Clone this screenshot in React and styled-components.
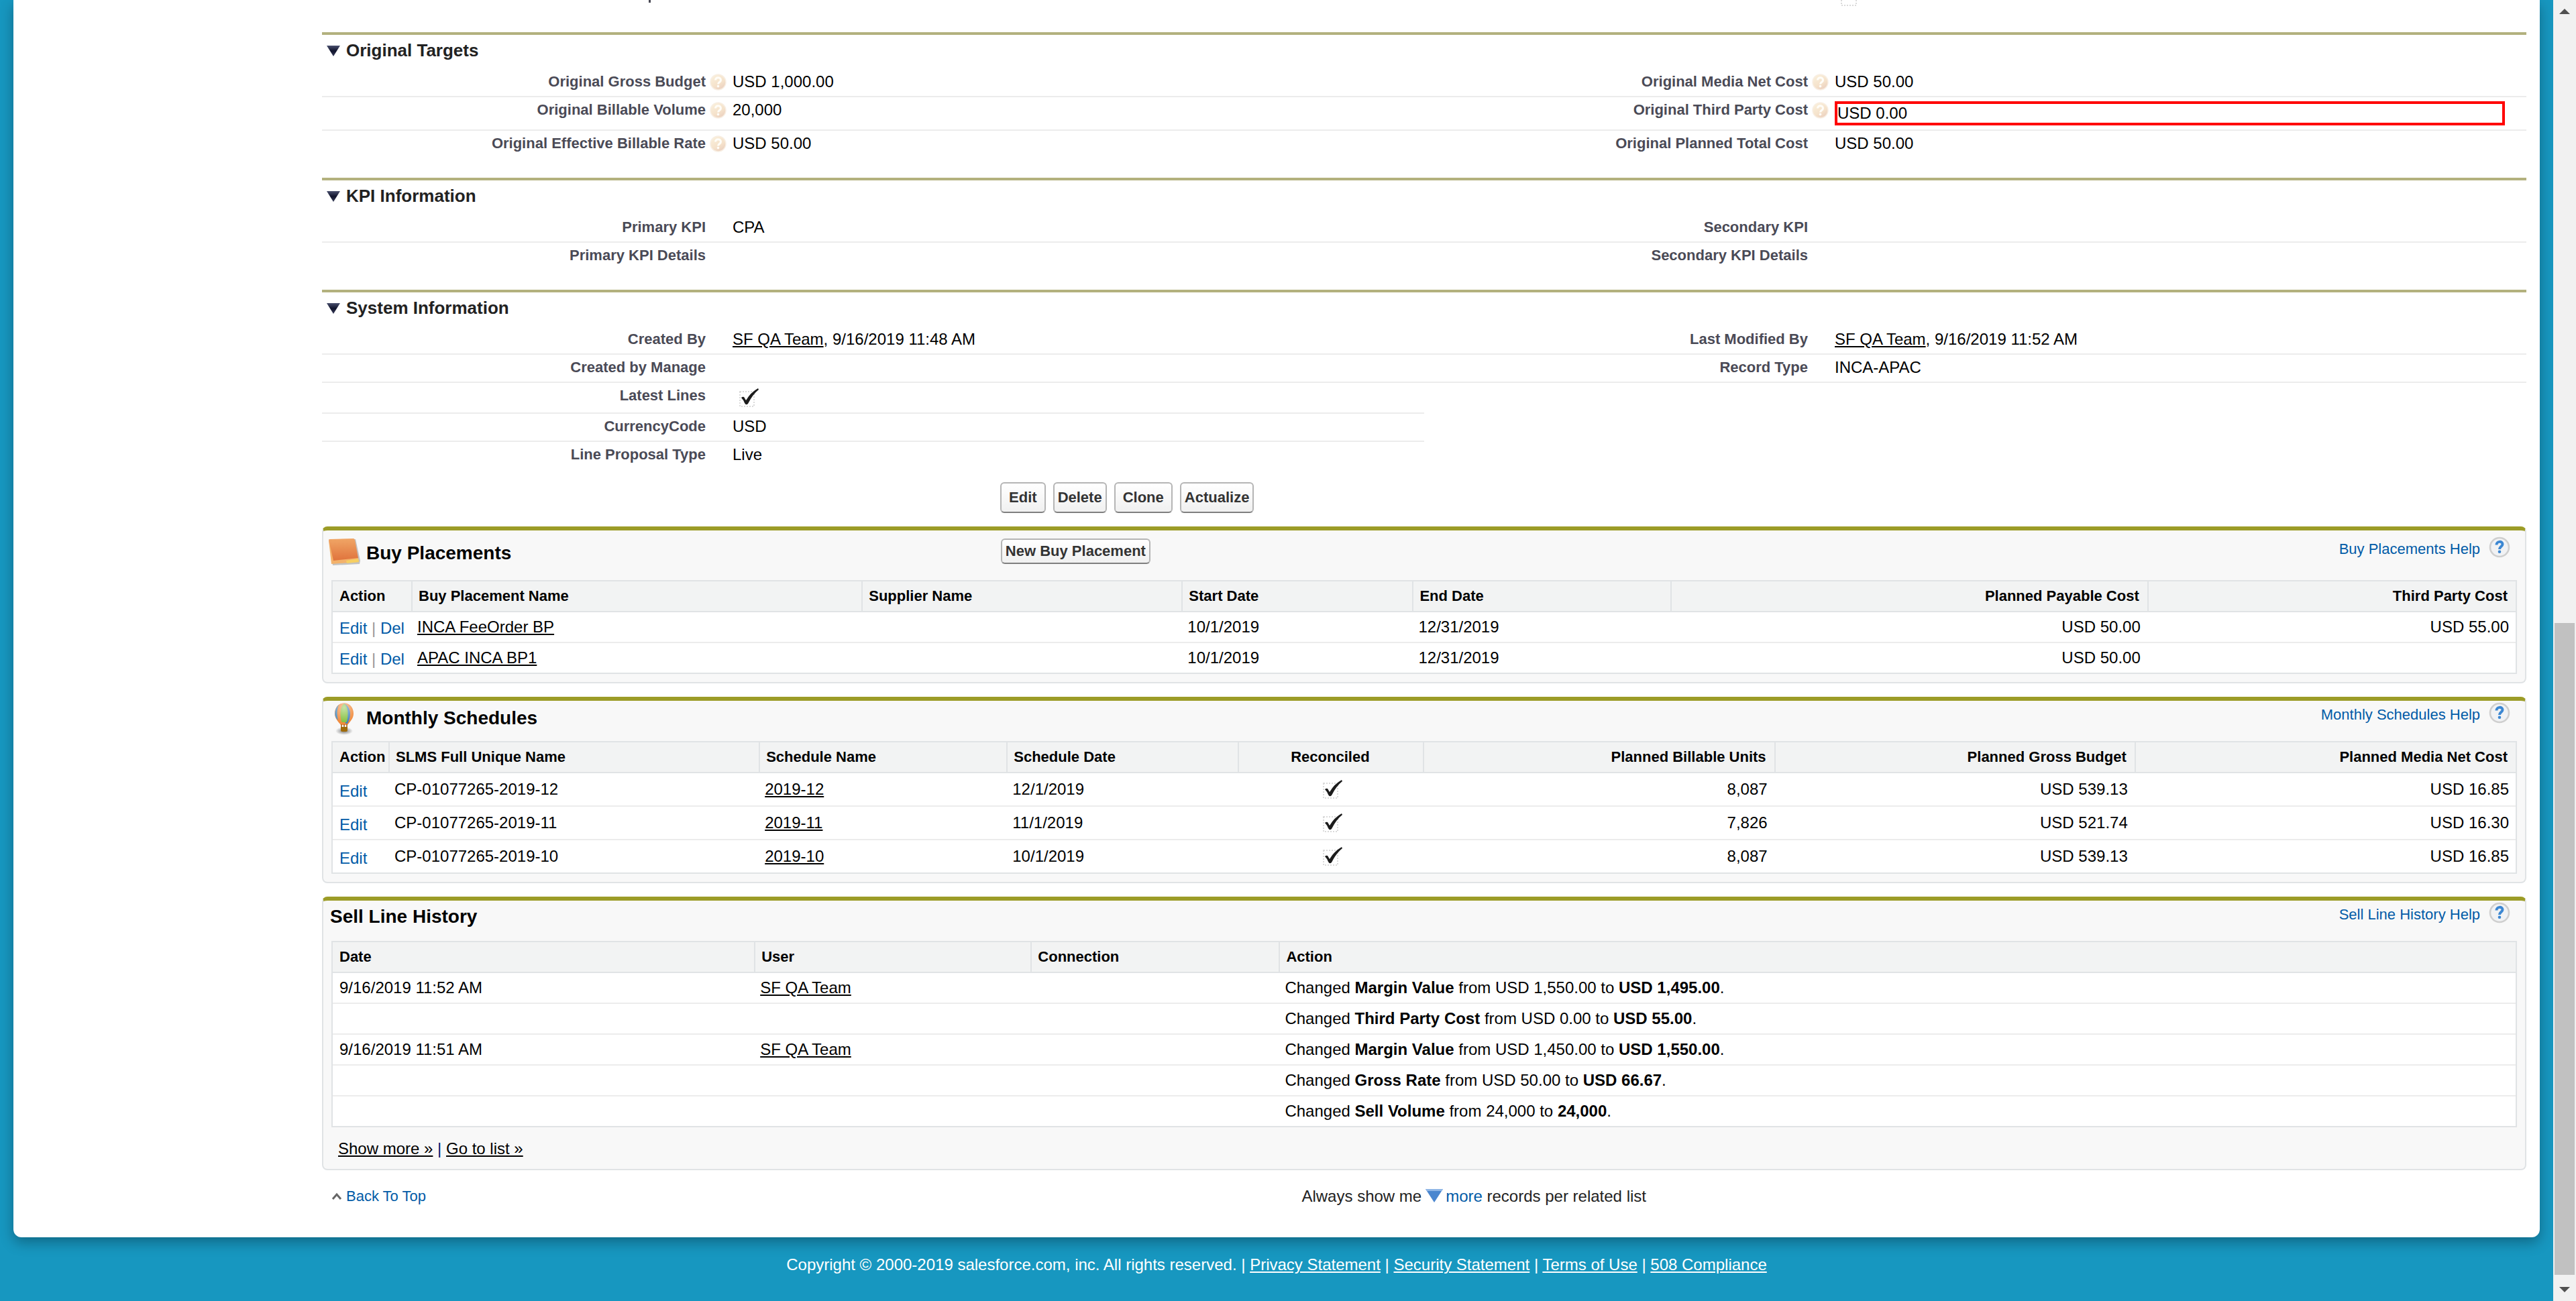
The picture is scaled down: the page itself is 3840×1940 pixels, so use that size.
import React from "react";
import styled, { createGlobalStyle, css } from "styled-components";

const GlobalStyle = createGlobalStyle`
  *, *::before, *::after { box-sizing: border-box; }
  body {
    margin: 0;
    background: #1797c0;
    color: #000;
    font-family: "Liberation Sans", Arial, Helvetica, sans-serif;
    font-size: 24px;
    line-height: 26px;
  }
`;

/* ---------- page frame ---------- */

const Shell = styled.div`
  display: grid;
  grid-template-columns: minmax(0, 1fr) 34px;
  min-height: 100vh;
`;

const Viewport = styled.div`
  display: flex;
  flex-direction: column;
  padding: 0 20px;
`;

const Sheet = styled.main`
  background: #fff;
  border-radius: 0 0 12px 12px;
  box-shadow: 0 8px 20px rgba(0, 0, 0, 0.3);
  padding: 0 20px 46px 460px;
`;

const PageFooter = styled.footer`
  padding: 27px 0 16px;
  color: #fff;
  text-align: center;
  line-height: 28px;
`;

const FooterLink = styled.a`
  color: #fff;
  text-decoration: underline;
`;

const ScrollRail = styled.div`
  display: flex;
  flex-direction: column;
  background: #f1f1f1;
`;

const ScrollArrow = styled.button`
  display: flex;
  align-items: center;
  justify-content: center;
  flex: 0 0 34px;
  padding: 0;
  border: 0;
  background: #f1f1f1;
`;

const ScrollGap = styled.div`
  flex: ${(p) => p.$share} 1 0;
`;

const ScrollThumb = styled.div`
  flex: 972 1 0;
  margin: 0 2px;
  background: #c1c1c1;
`;

/* ---------- detail sections ---------- */

const ClippedRow = styled.div`
  display: grid;
  grid-template-columns: 612fr 1031fr 612fr 1031fr;
  align-items: start;
  height: 48px;
  overflow: hidden;
`;

const Descender = styled.span`
  justify-self: end;
  width: 3px;
  height: 4px;
  margin-right: 122px;
  background: #4a4a56;
`;

const BoxEdge = styled.svg`
  display: block;
  grid-column: 4;
`;

const Section = styled.section`
  border-top: 4px solid #b3b17e;
  padding-bottom: ${(p) => (p.$last ? 20 : 30)}px;
`;

const SectionTitle = styled.h3`
  display: flex;
  align-items: center;
  gap: 9px;
  margin: 0;
  padding: 8px 0 13px 7px;
  color: #222;
  font-size: 26px;
  line-height: 30px;
`;

const FieldRow = styled.div`
  display: grid;
  grid-template-columns: 1fr 1fr;
`;

const fieldLine = css`
  border-bottom: 2px solid #ececec;
`;

const FieldPair = styled.dl`
  display: grid;
  grid-template-columns: 612fr 1031fr;
  align-items: start;
  min-height: ${(p) => (p.$line ? 42 : 40)}px;
  margin: 0;
  padding: 6px 0;
  ${(p) => p.$line && fieldLine}
`;

const FieldLabel = styled.dt`
  display: flex;
  justify-content: flex-end;
  color: #4a4a56;
  font-size: 22px;
  font-weight: bold;
`;

const HelpSlot = styled.span`
  flex: 0 0 40px;
  height: 26px;
  padding-left: 6px;
`;

const FieldValue = styled.dd`
  margin: 0 32px 0 0;
  ${(p) =>
    p.$flagged &&
    css`
      border: 4px solid #f00;
      line-height: 28px;
    `}
`;

const RecordLink = styled.a`
  color: #000;
  text-decoration: underline;
`;

const BlueLink = styled.a`
  color: #015ba7;
  font-size: ${(p) => (p.$small ? 22 : 24)}px;
  text-decoration: none;
`;

const Tick = styled.span`
  position: relative;
  display: inline-block;
  width: 42px;
  height: 32px;
  vertical-align: top;
`;

const TickInput = styled.input`
  position: absolute;
  inset: 0;
  width: 100%;
  height: 100%;
  margin: 0;
  appearance: none;
`;

const Glyph = styled.svg`
  display: block;
  flex: none;
`;

const InlineGlyph = styled.svg`
  margin: 0 4px 0 6px;
  vertical-align: -1px;
`;

/* ---------- buttons ---------- */

const ButtonRow = styled.div`
  display: grid;
  grid-template-columns: 4fr 9fr;
  padding-bottom: 20px;
`;

const Buttons = styled.div`
  grid-column: 2;
  display: flex;
  gap: 11px;
`;

const Button = styled.button`
  height: ${(p) => (p.$short ? 38 : 46)}px;
  padding: 0 ${(p) => (p.$roomy ? 11 : 5)}px;
  border: 2px solid #b5b5b5;
  border-bottom-color: #7f7f7f;
  border-radius: 6px;
  background: linear-gradient(#fff, #f0f0f0);
  color: #333;
  font-family: inherit;
  font-size: 22px;
  font-weight: bold;
  line-height: 26px;
  white-space: nowrap;
`;

/* ---------- related lists ---------- */

const Panel = styled.section`
  margin-bottom: 20px;
  border: 2px solid #e0e3e5;
  border-top: 6px solid #9c9c27;
  border-radius: 8px;
  background: #f8f8f8;
  padding-bottom: ${(p) => (p.$linked ? 0 : 12)}px;
`;

const PanelHead = styled.header`
  display: grid;
  grid-template-columns: 4fr 9fr;
  align-items: start;
  height: ${(p) => (p.$tall ? 74 : 60)}px;
`;

const PanelName = styled.div`
  display: flex;
  padding-left: ${(p) => (p.$plain ? 10 : 0)}px;
`;

const PanelTitle = styled.h3`
  margin: 0;
  padding-top: ${(p) => p.$drop}px;
  font-size: 28px;
  line-height: 32px;
`;

const PanelTools = styled.div`
  display: flex;
  align-items: flex-start;
  padding-top: ${(p) => (p.$tall ? 12 : 2)}px;
`;

const PanelHelp = styled.a`
  display: flex;
  align-items: flex-end;
  gap: 13px;
  margin: ${(p) => (p.$tall ? "-3px" : "0")} 22px 0 auto;
  color: #015ba7;
  font-size: 22px;
  text-decoration: none;
`;

const TableFrame = styled.div`
  margin: 0 12px;
  border: 2px solid #e0e3e5;
  background: #fff;
`;

const DataTable = styled.table`
  width: 100%;
  table-layout: fixed;
  border-collapse: separate;
  border-spacing: 0;
`;

const HeadCell = styled.th`
  padding: 9px 12px 9px 9px;
  border-bottom: 2px solid #e0e3e5;
  border-left: 2px solid #e0e3e5;
  background: #f2f3f3;
  font-size: 22px;
  line-height: 26px;
  text-align: ${(p) => p.$align || "left"};
  white-space: nowrap;

  &:first-child {
    border-left: 0;
    padding-left: 10px;
    padding-right: 0;
  }
`;

const Cell = styled.td`
  height: ${(p) => (p.$tall ? 50 : 46)}px;
  padding: ${(p) => (p.$action ? 11 : p.$tall ? 8 : 9)}px 10px 0 9px;
  border-bottom: 2px solid #ececec;
  line-height: ${(p) => (p.$tall ? 32 : 26)}px;
  text-align: ${(p) => p.$align || "left"};
  vertical-align: top;
  white-space: nowrap;

  tr:last-child > & {
    height: ${(p) => (p.$tall ? 48 : 44)}px;
    border-bottom: 0;
  }

  &:first-child {
    padding-left: 10px;
    padding-right: 0;
  }
`;

const Bar = styled.span`
  color: #9a9a9a;
`;

const ListLinks = styled.div`
  padding: 18px 0 16px 22px;
  line-height: 28px;
`;

const NavyBar = styled.span`
  color: #00186f;
`;

const Bottom = styled.div`
  display: grid;
  grid-template-columns: 4fr 5fr;
  padding-top: 4px;
`;

const BackToTop = styled.div`
  display: flex;
  align-items: center;
  gap: 6px;
  padding-left: 14px;
`;

const MoreRecords = styled.div`
  color: #222;
  line-height: 30px;
`;

/* ---------- drawings ---------- */

const Twisty = () => (
  <Glyph width="20" height="18" viewBox="0 0 20 18" aria-hidden="true">
    <defs>
      <linearGradient id="twisty" x1="0" y1="0" x2="0" y2="1">
        <stop offset="0" stopColor="#4a506e" />
        <stop offset="0.5" stopColor="#10132c" />
        <stop offset="1" stopColor="#3b3f5c" />
      </linearGradient>
    </defs>
    <path d="M0 2h20L10 18z" fill="url(#twisty)" />
  </Glyph>
);

const FieldHelp = () => (
  <Glyph width="25" height="26" viewBox="0 0 25 26" aria-hidden="true">
    <defs>
      <linearGradient id="fieldHelp" x1="0.2" y1="0" x2="0.8" y2="1">
        <stop offset="0" stopColor="#faf0dc" />
        <stop offset="0.6" stopColor="#f5e2cb" />
        <stop offset="1" stopColor="#e9cdbd" />
      </linearGradient>
    </defs>
    <circle cx="12.5" cy="13.5" r="11.5" fill="url(#fieldHelp)" stroke="#f8efe4" strokeWidth="1.5" />
    <path d="M8.500 10.500c0-5 8-5 8 0 0 3-4 3-4 6" fill="none" stroke="#fffdf8" strokeWidth="3" />
    <circle cx="12.5" cy="19.6" r="1.8" fill="#fffdf8" />
  </Glyph>
);

const PanelHelpIcon = () => (
  <Glyph width="32" height="32" viewBox="0 0 32 32" aria-hidden="true">
    <circle cx="16" cy="16" r="14" fill="#f1f2f4" stroke="#cfcfcf" strokeWidth="2.6" />
    <path d="M11.5 12.500C11.500 6.500 20.500 6.500 20.500 11.500 20.500 15 16 15 16 19" fill="none" stroke="#3c87d2" strokeWidth="4" />
    <circle cx="16" cy="22.800" r="2.300" fill="#3c87d2" />
  </Glyph>
);

const BookIcon = () => (
  <Glyph width="64" height="60" viewBox="0 0 64 60" aria-hidden="true">
    <defs>
      <linearGradient id="book" x1="0" y1="0" x2="0" y2="1">
        <stop offset="0" stopColor="#f0a666" />
        <stop offset="1" stopColor="#e0733c" />
      </linearGradient>
    </defs>
    <path d="M10 16 48 13 55 45 54 50 14 52z" fill="#8b8b8b" opacity="0.5" />
    <path d="M8 15 12 50 53 47 52 41z" fill="#f3b26b" />
    <path d="M34 45 52 42 53 47 35 49z" fill="#f6cf62" />
    <path d="M8 14Q8 13 10 13L45 12Q46 12 47 14L52 41 15 45Z" fill="url(#book)" />
  </Glyph>
);

const BalloonIcon = () => (
  <Glyph width="64" height="60" viewBox="0 0 64 60" aria-hidden="true">
    <defs>
      <radialGradient id="balloonGlow" cx="0.5" cy="0.2" r="0.7">
        <stop offset="0" stopColor="#fff" stopOpacity="0.55" />
        <stop offset="1" stopColor="#fff" stopOpacity="0" />
      </radialGradient>
      <radialGradient id="balloonShade">
        <stop offset="0" stopColor="#444" stopOpacity="0.7" />
        <stop offset="1" stopColor="#444" stopOpacity="0" />
      </radialGradient>
    </defs>
    <ellipse cx="31" cy="45" rx="13" ry="6" fill="url(#balloonShade)" />
    <path d="M31 3.500C22 3.500 17 11 17 19c0 7 5 12 9 17h10c4-5 9-10 9-17 0-8-5-15.500-14-15.500z" fill="#f08a3c" />
    <path d="M23 6C18 10 16.500 18 18 23c.5 2 2 4 4 6-2-8-2-16 1-23z" fill="#4a90c8" />
    <path d="M31 4c6 3 9 9 9 16 0 5-2 10-4 14h-3z" fill="#3f7fc0" />
    <path d="M31 4c-4 3-5.500 9-5.500 15 0 5 .5 9 2 13h7c1.500-4 2-8 2-13 0-6-1.500-12-5.500-15z" fill="#83c03c" />
    <path d="M31 3.500C22 3.500 17 11 17 19c0 7 5 12 9 17h10c4-5 9-10 9-17 0-8-5-15.500-14-15.500z" fill="url(#balloonGlow)" />
    <path d="M27 35v5M31 35v5M35 35v5" stroke="#a8641c" strokeWidth="1.6" />
    <path d="M26 39h10v5q0 2-2 2h-6q-2 0-2-2z" fill="#a06a08" />
  </Glyph>
);

const TickBox = ({ label }) => (
  <Tick>
    <TickInput type="checkbox" aria-label={label} checked readOnly />
    <Glyph width="42" height="32" viewBox="0 0 42 32" aria-hidden="true">
      <rect x="11" y="7" width="21" height="22" fill="none" stroke="#dadada" strokeWidth="2" strokeDasharray="2 2" />
      <path d="M13 16Q15 14 17 15L20 20Q27 8 38 2L39 4Q30 11 23 25 20 28 18 24 16 19 13 16z" fill="#1c1c1c" />
    </Glyph>
  </Tick>
);

/* ---------- data ---------- */

const stamp = (time) => (
  <>
    <RecordLink href="#user">SF QA Team</RecordLink>, {time}
  </>
);

const sections = [
  {
    title: "Original Targets",
    rows: [
      [
        { label: "Original Gross Budget", value: "USD 1,000.00", help: true },
        { label: "Original Media Net Cost", value: "USD 50.00", help: true },
      ],
      [
        { label: "Original Billable Volume", value: "20,000", help: true },
        { label: "Original Third Party Cost", value: "USD 0.00", help: true, flagged: true },
      ],
      [
        { label: "Original Effective Billable Rate", value: "USD 50.00", help: true },
        { label: "Original Planned Total Cost", value: "USD 50.00" },
      ],
    ],
  },
  {
    title: "KPI Information",
    rows: [
      [{ label: "Primary KPI", value: "CPA" }, { label: "Secondary KPI" }],
      [{ label: "Primary KPI Details" }, { label: "Secondary KPI Details" }],
    ],
  },
  {
    title: "System Information",
    rows: [
      [
        { label: "Created By", value: stamp("9/16/2019 11:48 AM") },
        { label: "Last Modified By", value: stamp("9/16/2019 11:52 AM") },
      ],
      [{ label: "Created by Manage" }, { label: "Record Type", value: "INCA-APAC" }],
      [{ label: "Latest Lines", value: <TickBox label="Latest Lines" /> }],
      [{ label: "CurrencyCode", value: "USD" }],
      [{ label: "Line Proposal Type", value: "Live" }],
    ],
  },
];

const editLink = <BlueLink href="#edit">Edit</BlueLink>;
const editDel = (
  <>
    {editLink} <Bar>|</Bar> <BlueLink href="#del">Del</BlueLink>
  </>
);
const record = (name) => <RecordLink href="#record">{name}</RecordLink>;
const change = (field, from, to) => (
  <>
    Changed <b>{field}</b> from {from} to <b>{to}</b>.
  </>
);

const placements = {
  columns: [
    { name: "Action", width: "117px", action: true },
    { name: "Buy Placement Name", share: 671 },
    { name: "Supplier Name", share: 477 },
    { name: "Start Date", share: 344 },
    { name: "End Date", share: 384 },
    { name: "Planned Payable Cost", share: 711, align: "right" },
    { name: "Third Party Cost", align: "right" },
  ],
  rows: [
    [editDel, record("INCA FeeOrder BP"), "", "10/1/2019", "12/31/2019", "USD 50.00", "USD 55.00"],
    [editDel, record("APAC INCA BP1"), "", "10/1/2019", "12/31/2019", "USD 50.00", ""],
  ],
};

const scheduleRow = (month, date, units, gross, net) => [
  editLink,
  `CP-01077265-${month}`,
  record(month),
  date,
  <TickBox label={`Reconciled ${month}`} />,
  units,
  gross,
  net,
];

const schedules = {
  tall: true,
  columns: [
    { name: "Action", width: "83px", action: true },
    { name: "SLMS Full Unique Name", share: 552 },
    { name: "Schedule Name", share: 369 },
    { name: "Schedule Date", share: 345 },
    { name: "Reconciled", share: 276, align: "center" },
    { name: "Planned Billable Units", share: 523, align: "right" },
    { name: "Planned Gross Budget", share: 537, align: "right" },
    { name: "Planned Media Net Cost", align: "right" },
  ],
  rows: [
    scheduleRow("2019-12", "12/1/2019", "8,087", "USD 539.13", "USD 16.85"),
    scheduleRow("2019-11", "11/1/2019", "7,826", "USD 521.74", "USD 16.30"),
    scheduleRow("2019-10", "10/1/2019", "8,087", "USD 539.13", "USD 16.85"),
  ],
};

const history = {
  columns: [
    { name: "Date", share: 628 },
    { name: "User", share: 412 },
    { name: "Connection", share: 370 },
    { name: "Action" },
  ],
  rows: [
    ["9/16/2019 11:52 AM", record("SF QA Team"), "", change("Margin Value", "USD 1,550.00", "USD 1,495.00")],
    ["", "", "", change("Third Party Cost", "USD 0.00", "USD 55.00")],
    ["9/16/2019 11:51 AM", record("SF QA Team"), "", change("Margin Value", "USD 1,450.00", "USD 1,550.00")],
    ["", "", "", change("Gross Rate", "USD 50.00", "USD 66.67")],
    ["", "", "", change("Sell Volume", "24,000", "24,000")],
  ],
};

const TABLE_SHARES = 3253;

/* ---------- composed parts ---------- */

const Field = ({ field, line }) => (
  <FieldPair $line={line}>
    <FieldLabel>
      {field.label}
      <HelpSlot>{field.help && <FieldHelp />}</HelpSlot>
    </FieldLabel>
    <FieldValue $flagged={field.flagged}>{field.value}</FieldValue>
  </FieldPair>
);

const DetailSection = ({ section, last }) => (
  <Section $last={last}>
    <SectionTitle>
      <Twisty />
      {section.title}
    </SectionTitle>
    {section.rows.map((row, i) => (
      <FieldRow key={i}>
        {row.map((field) => (
          <Field key={field.label} field={field} line={i < section.rows.length - 1} />
        ))}
      </FieldRow>
    ))}
  </Section>
);

const ListTable = ({ data }) => (
  <TableFrame>
    <DataTable>
      <colgroup>
        {data.columns.map((c) => (
          <col
            key={c.name}
            style={{ width: c.width || (c.share ? `${(c.share / TABLE_SHARES) * 100}%` : "auto") }}
          />
        ))}
      </colgroup>
      <thead>
        <tr>
          {data.columns.map((c) => (
            <HeadCell key={c.name} scope="col" $align={c.align}>
              {c.name}
            </HeadCell>
          ))}
        </tr>
      </thead>
      <tbody>
        {data.rows.map((row, r) => (
          <tr key={r}>
            {row.map((value, i) => (
              <Cell key={i} $tall={data.tall} $action={data.columns[i].action} $align={data.columns[i].align}>
                {value}
              </Cell>
            ))}
          </tr>
        ))}
      </tbody>
    </DataTable>
  </TableFrame>
);

const RelatedList = ({ title, icon, button, data, links }) => {
  const tall = Boolean(button);
  const drop = tall ? 18 : icon ? 10 : 8;
  return (
    <Panel $linked={Boolean(links)}>
      <PanelHead $tall={tall}>
        <PanelName $plain={!icon}>
          {icon}
          <PanelTitle $drop={drop}>{title}</PanelTitle>
        </PanelName>
        <PanelTools $tall={tall}>
          {button && (
            <Button type="button" $short>
              {button}
            </Button>
          )}
          <PanelHelp href="#help" $tall={tall}>
            {title} Help
            <PanelHelpIcon />
          </PanelHelp>
        </PanelTools>
      </PanelHead>
      <ListTable data={data} />
      {links}
    </Panel>
  );
};

export default function App() {
  return (
    <>
      <GlobalStyle />
      <Shell>
        <Viewport>
          <Sheet>
            <ClippedRow>
              <Descender />
              <BoxEdge width="42" height="10" viewBox="0 0 42 10" aria-hidden="true">
                <path d="M10 0V8H32V0" fill="none" stroke="#dadada" strokeWidth="2" strokeDasharray="2 2" />
              </BoxEdge>
            </ClippedRow>
            {sections.map((s, i) => (
              <DetailSection key={s.title} section={s} last={i === sections.length - 1} />
            ))}
            <ButtonRow>
              <Buttons>
                <Button type="button" $roomy>Edit</Button>
                <Button type="button">Delete</Button>
                <Button type="button" $roomy>Clone</Button>
                <Button type="button">Actualize</Button>
              </Buttons>
            </ButtonRow>
            <RelatedList title="Buy Placements" icon={<BookIcon />} button="New Buy Placement" data={placements} />
            <RelatedList title="Monthly Schedules" icon={<BalloonIcon />} data={schedules} />
            <RelatedList
              title="Sell Line History"
              data={history}
              links={
                <ListLinks>
                  <RecordLink href="#more">Show more »</RecordLink> <NavyBar>|</NavyBar>{" "}
                  <RecordLink href="#list">Go to list »</RecordLink>
                </ListLinks>
              }
            />
            <Bottom>
              <BackToTop>
                <Glyph width="16" height="12" viewBox="0 0 16 12" aria-hidden="true">
                  <path d="M2 10 8 3l6 7" fill="none" stroke="#666" strokeWidth="3" />
                </Glyph>
                <BlueLink href="#top" $small>Back To Top</BlueLink>
              </BackToTop>
              <MoreRecords>
                Always show me
                <InlineGlyph width="26" height="20" viewBox="0 0 26 20" aria-hidden="true">
                  <path d="M0 0h26L13 20z" fill="#4a86cf" />
                  <path d="M0 0h26l-2 3H2z" fill="#8fb6e6" />
                </InlineGlyph>
                <BlueLink href="#more-records">more</BlueLink> records per related list
              </MoreRecords>
            </Bottom>
          </Sheet>
          <PageFooter>
            Copyright © 2000-2019 salesforce.com, inc. All rights reserved. |{" "}
            <FooterLink href="#privacy">Privacy Statement</FooterLink> |{" "}
            <FooterLink href="#security">Security Statement</FooterLink> |{" "}
            <FooterLink href="#terms">Terms of Use</FooterLink> |{" "}
            <FooterLink href="#508">508 Compliance</FooterLink>
          </PageFooter>
        </Viewport>
        <ScrollRail>
          <ScrollArrow type="button" aria-label="Scroll up">
            <Glyph width="16" height="8" viewBox="0 0 16 8"><path d="M0 8 8 0l8 8z" fill="#505050" /></Glyph>
          </ScrollArrow>
          <ScrollGap $share={895} />
          <ScrollThumb />
          <ScrollGap $share={5} />
          <ScrollArrow type="button" aria-label="Scroll down">
            <Glyph width="16" height="8" viewBox="0 0 16 8"><path d="M0 0h16L8 8z" fill="#505050" /></Glyph>
          </ScrollArrow>
        </ScrollRail>
      </Shell>
    </>
  );
}
